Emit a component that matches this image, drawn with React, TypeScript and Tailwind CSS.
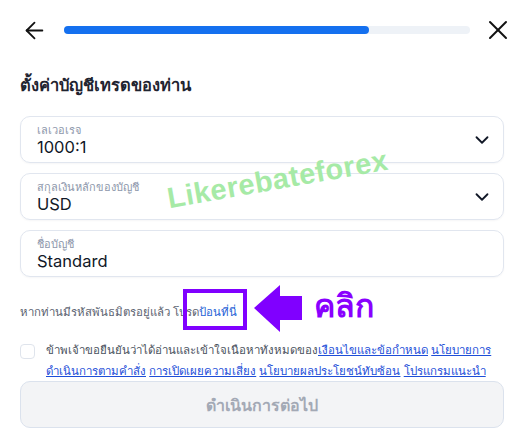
import { ArrowLeft, X, ChevronDown } from "lucide-react";

type FieldProps = {
  label: string;
  value: string;
  select?: boolean;
};

function Field({ label, value, select }: FieldProps) {
  return (
    <div className="flex h-[47px] items-center rounded-[10px] border border-[#e1e6ef] pl-4 pr-[10px] shadow-[0_1px_2px_rgba(16,24,40,0.04)]">
      <div className="flex flex-1 flex-col">
        <span className="text-[11px] leading-[14px] text-[#8d97ab]">{label}</span>
        <span className="text-[16.5px] leading-[20px] text-[#111827]">{value}</span>
      </div>
      {select && <ChevronDown className="h-[22px] w-[22px] text-[#111827]" strokeWidth={2} />}
    </div>
  );
}

export default function App() {
  return (
    <div className="relative h-[446px] w-[524px] overflow-hidden bg-white font-['Inter','Noto_Sans',sans-serif]">
      {/* header */}
      <div className="flex h-[60px] items-center pl-[21px] pr-[10px]">
        <ArrowLeft className="h-[27px] w-[27px] text-[#111]" strokeWidth={1.6} />
        <div className="ml-[16px] mr-[12px] h-2 flex-1 rounded-full bg-[#eef2f7]">
          <div className="h-2 w-[75%] rounded-full bg-[#1570ef]" />
        </div>
        <X className="h-8 w-8 text-[#111]" strokeWidth={1.5} />
      </div>

      <div className="px-5">
        <h1 className="mt-[14px] text-[16.5px] font-bold leading-[22px] text-[#1f2430]">ตั้งค่าบัญชีเทรดของท่าน</h1>

        <div className="mt-[20px] flex flex-col gap-[10px]">
          <Field label="เลเวอเรจ" value="1000:1" select />
          <Field label="สกุลเงินหลักของบัญชี" value="USD" select />
          <Field label="ชื่อบัญชี" value="Standard" />
        </div>

        <p className="mt-[26px] text-[11.4px] leading-[18px] text-[#5b6270]">
          หากท่านมีรหัสพันธมิตรอยู่แล้ว โปรด<span className="text-[#1f5fd6]">ป้อนที่นี่</span>
        </p>

        <div className="mt-[23px] flex gap-[11px]">
          <div className="h-[15px] w-[15px] shrink-0 rounded-[4px] border border-[#dfe4ec]" />
          <div className="h-[37px] overflow-hidden">
            <p className="-mt-[4px] text-[11.5px] leading-[21px] text-[#4b5260]">
              ข้าพเจ้าขอยืนยันว่าได้อ่านและเข้าใจเนื้อหาทั้งหมดของ
              <a className="text-[#1d4ed8] underline">เงื่อนไขและข้อกำหนด</a>{" "}
              <a className="text-[#1d4ed8] underline">นโยบายการดำเนินการตามคำสั่ง</a>{" "}
              <a className="text-[#1d4ed8] underline">การเปิดเผยความเสี่ยง</a>{" "}
              <a className="text-[#1d4ed8] underline">นโยบายผลประโยชน์ทับซ้อน</a>{" "}
              <a className="text-[#1d4ed8] underline">โปรแกรมแนะนำเพื่อน</a> เงื่อนไขโปรโมชั่น และข้อตกลงอื่นๆ ที่เกี่ยวข้องทั้งหมด
            </p>
          </div>
        </div>

        <button className="flex h-[47px] w-full items-center justify-center rounded-[10px] border border-[#dbe2ed] bg-[#f3f4f6] text-[16px] font-bold text-[#a3a9b5]">
          ดำเนินการต่อไป
        </button>
      </div>

      {/* watermark */}
      <div className="pointer-events-none absolute left-[166px] top-[158px] -rotate-[10deg] text-[29px] font-bold tracking-[0.5px] text-[#a6eaa6] font-['Liberation_Sans',sans-serif]">
        Likerebateforex
      </div>

      {/* annotation */}
      <div className="pointer-events-none absolute left-[183px] top-[289px] h-[41px] w-[64px] border-[4px] border-[#8000ff]" />
      <svg className="pointer-events-none absolute left-[254px] top-[285px]" width="48" height="48" viewBox="0 0 48 48">
        <polygon points="0,23 26,0 26,11 48,11 48,35 26,35 26,47" fill="#8000ff" />
      </svg>
      <div className="pointer-events-none absolute left-[314px] top-[284px] text-[32px] font-bold leading-[44px] text-[#8a00ff]">
        คลิก
      </div>
    </div>
  );
}
